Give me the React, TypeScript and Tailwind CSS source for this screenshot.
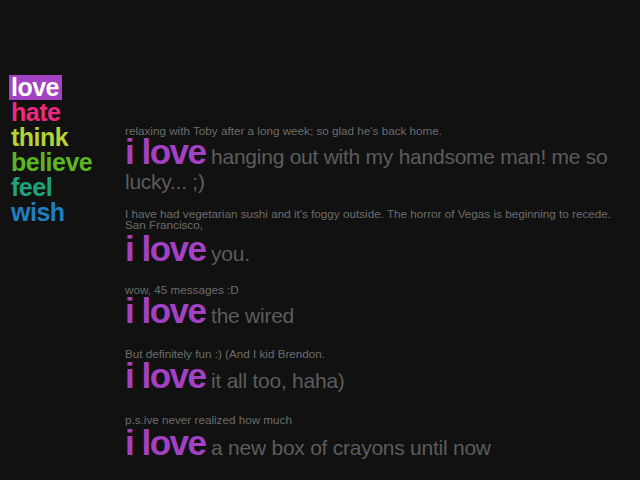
import React from "react";

const nav = [
  { t: "love", c: "text-white bg-[#a241c2]" },
  { t: "hate", c: "text-[#f0287f]" },
  { t: "think", c: "text-[#b5d335]" },
  { t: "believe", c: "text-[#5cb523]" },
  { t: "feel", c: "text-[#1fa37e]" },
  { t: "wish", c: "text-[#1f7fc0]" },
];

const entries = [
  {
    cap: ["relaxing with Toby after a long week; so glad he's back home."],
    rest: "hanging out with my handsome man! me so lucky... ;)",
    top: 0,
    gap: 1,
  },
  {
    cap: [
      "I have had vegetarian sushi and it's foggy outside. The horror of Vegas is beginning to recede.",
      "San Francisco,",
    ],
    rest: "you.",
    top: 14,
    gap: 4,
  },
  { cap: ["wow, 45 messages :D"], rest: "the wired", top: 18, gap: 1 },
  { cap: ["But definitely fun :) (And I kid Brendon."], rest: "it all too, haha)", top: 20, gap: 2 },
  { cap: ["p.s.ive never realized how much"], rest: "a new box of crayons until now", top: 21, gap: 3 },
];

export default function App() {
  return (
    <div
      className="w-[640px] h-[480px] bg-[#111111] overflow-hidden flex"
      style={{ fontFamily: '"Liberation Sans", Arial, sans-serif' }}
    >
      <div className="pt-[75px] pl-[9px] w-[125px] shrink-0 flex flex-col items-start">
        {nav.map((n) => (
          <div
            key={n.t}
            className={`text-[25px] leading-[25px] font-bold tracking-[-0.5px] pl-[2px] pr-[3px] ${n.c}`}
          >
            {n.t}
          </div>
        ))}
      </div>
      <div className="pt-[125px] w-[495px] flex flex-col">
        {entries.map((e, i) => (
          <div key={i} className="flex flex-col" style={{ marginTop: e.top }}>
            {e.cap.map((c, j) => (
              <div key={j} className="text-[11.7px] leading-[11px] text-[#6c6c6c]">
                {c}
              </div>
            ))}
            <div
              className="text-[21px] leading-[25px] text-[#5c5c5c] tracking-[-0.25px]"
              style={{ marginTop: e.gap }}
            >
              <span className="text-[35px] leading-[30px] font-bold text-[#a241c2] tracking-[-1.5px]">
                i love
              </span>{" "}
              {e.rest}
            </div>
          </div>
        ))}
      </div>
    </div>
  );
}
